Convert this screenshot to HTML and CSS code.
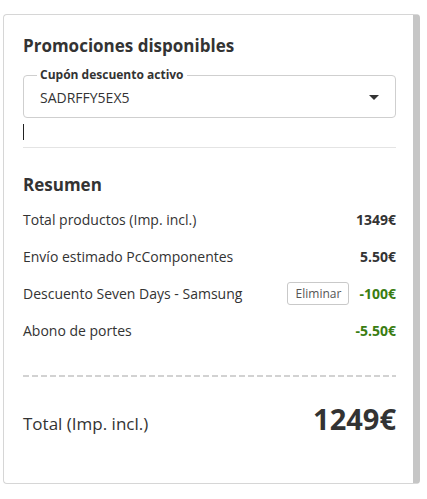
FILE: index.html
```html
<!DOCTYPE html>
<html lang="es">
<head>
<meta charset="utf-8">
<link rel="stylesheet" href="styles.css">
</head>
<body>
<div class="card">
  <h2 class="title">Promociones disponibles</h2>
  <div class="select">
    <span class="select-label">Cupón descuento activo</span>
    <span class="select-value">SADRFFY5EX5</span>
    <svg class="arrow" width="10" height="5" viewBox="0 0 10 5"><path d="M0 0H10L5 5Z" fill="#333"/></svg>
  </div>
  <div class="caret-row"><span class="caret"></span></div>
  <hr class="sep">
  <h2 class="title summary-title">Resumen</h2>
  <div class="rows">
    <div class="row"><span>Total productos (Imp. incl.)</span><span class="val">1349€</span></div>
    <div class="row"><span>Envío estimado PcComponentes</span><span class="val">5.50€</span></div>
    <div class="row"><span>Descuento Seven Days - Samsung</span><span class="right"><button class="btn">Eliminar</button><span class="val green">-100€</span></span></div>
    <div class="row"><span>Abono de portes</span><span class="val green">-5.50€</span></div>
  </div>
  <div class="dashed"></div>
  <div class="total"><span class="total-label">Total (Imp. incl.)</span><span class="total-val">1249€</span></div>
</div>
</body>
</html>
```
FILE: styles.css
```css
* { box-sizing: border-box; }
html, body { margin: 0; padding: 0; background: #fff; }
body {
  font-family: "Open Sans", "Noto Sans", sans-serif;
  color: #333;
  padding: 14px 0 0 3px;
}
.card {
  width: 417px;
  height: 470px;
  border: 1px solid #d6d6d6;
  border-right: 7px solid #c6c6c6;
  border-radius: 4px;
  padding: 19px 17px 0 19px;
}
.title {
  margin: 0;
  font-size: 17px;
  line-height: 24px;
  font-weight: 700;
  color: #333;
}
.select {
  position: relative;
  margin-top: 17px;
  height: 43px;
  border: 1px solid #cfcfcf;
  border-radius: 4px;
  display: flex;
  align-items: center;
  justify-content: space-between;
  padding: 0 16px 0 16px;
}
.select-label {
  position: absolute;
  top: -9px;
  left: 13px;
  background: #fff;
  padding: 0 3px;
  font-size: 12px;
  line-height: 16px;
  font-weight: 700;
  color: #333;
}
.select-value {
  font-size: 14px;
  line-height: 20px;
  color: #333;
  padding-top: 2px;
}
.arrow { display: block; margin-top: 2px; }
.caret-row { height: 29px; padding-top: 6px; }
.caret { display: block; width: 1px; height: 16px; background: #222; }
.sep {
  margin: 0;
  border: 0;
  border-top: 1px solid #e4e4e4;
}
.summary-title { margin-top: 25px; }
.rows { margin-top: 4px; }
.row {
  display: flex;
  justify-content: space-between;
  align-items: center;
  height: 37px;
  font-size: 14px;
}
.right { display: flex; align-items: center; gap: 10px; }
.val { font-weight: 700; font-size: 14px; color: #333; }
.green { color: #3a7d12; }
.btn {
  font-family: inherit;
  font-size: 12px;
  color: #555;
  background: #fff;
  border: 1px solid #c9c9c9;
  border-radius: 3px;
  height: 23px;
  width: 62px;
  padding: 0;
}
.dashed {
  margin-top: 26px;
  height: 2px;
  background: repeating-linear-gradient(to right, #d2d2d2 0 6px, transparent 6px 9px);
}
.total {
  display: flex;
  justify-content: space-between;
  align-items: baseline;
  margin-top: 23px;
}
.total-label { font-size: 17px; line-height: 24px; }
.total-val { font-size: 29px; font-weight: 700; line-height: 38px; }
```
